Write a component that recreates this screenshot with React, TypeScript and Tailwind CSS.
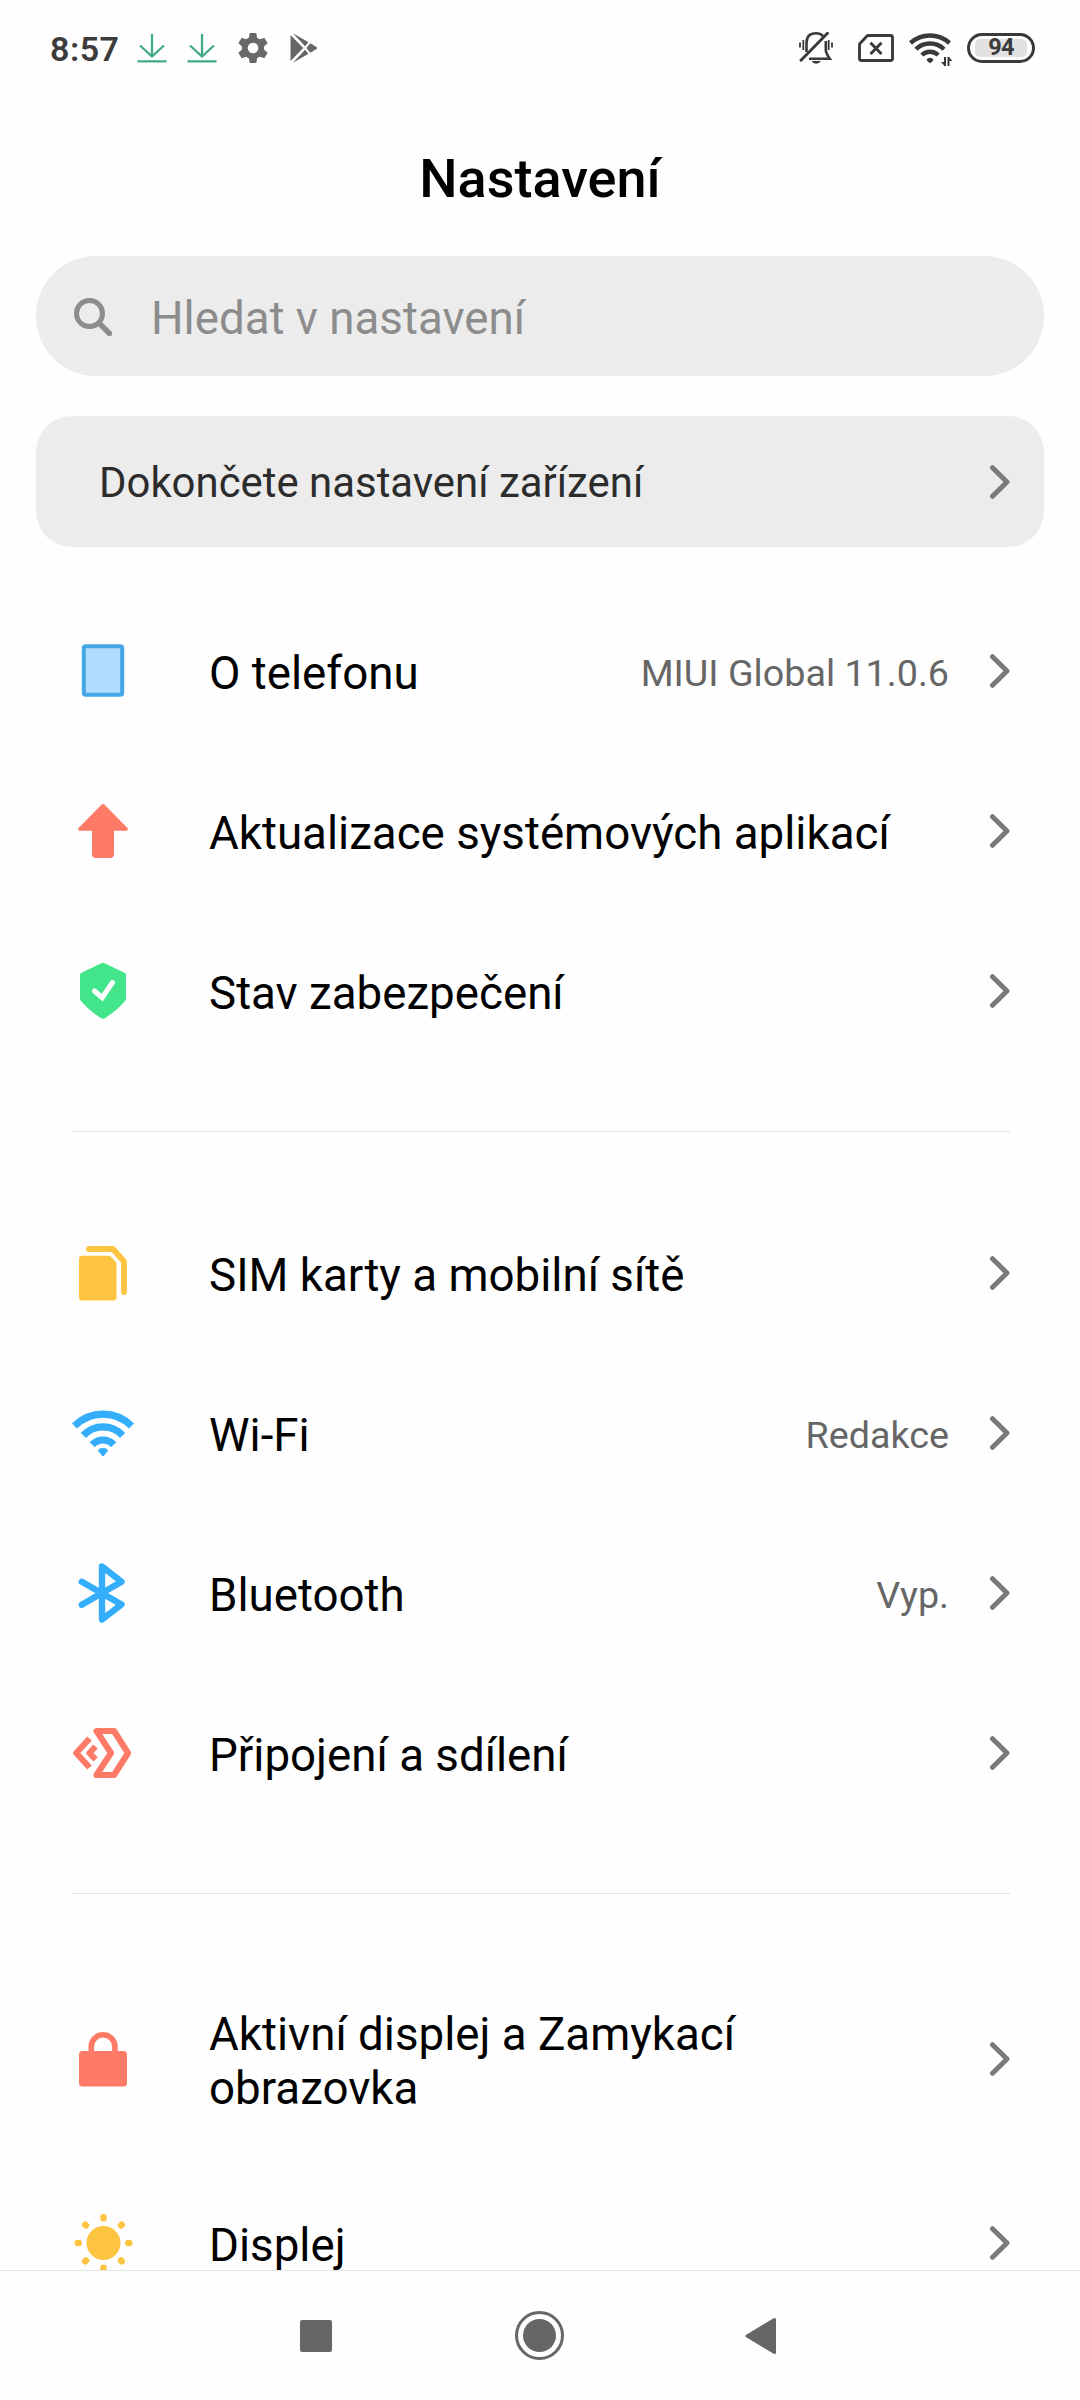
import React from "react";

const Svg = ({ children, className = "" }: { children: React.ReactNode; className?: string }) => (
  <svg viewBox="0 0 64 64" fill="none" className={`h-16 w-16 shrink-0 ${className}`}>
    {children}
  </svg>
);

const Chevron = () => (
  <svg viewBox="0 0 20 34" fill="none" className="h-[34px] w-5 shrink-0">
    <path d="M2.5 2.7 17 17 2.5 31.3" stroke="#7a7a7a" strokeWidth="5" strokeLinecap="round" strokeLinejoin="round" />
  </svg>
);

const PhoneIcon = () => (
  <Svg>
    <rect x="12.800" y="7.300" width="38.400" height="48.500" rx="2" fill="#b0dcfd" stroke="#45a6e6" strokeWidth="4" />
  </Svg>
);
const UpdateIcon = () => (
  <Svg>
    <path
      d="M33.4 5.6a2 2 0 0 0-2.8 0L7.6 29c-1.100 1.200-.4 2.700 1.200 2.700H21V55q0 4 4 4h14q4 0 4-4V31.700h12.200c1.600 0 2.300-1.500 1.200-2.700z"
      fill="#fd7b66"
    />
  </Svg>
);
const ShieldIcon = () => (
  <Svg>
    <path
      d="M30.300 4.300q1.700-1 3.400 0L54 14q1 .6 1 2v23q0 2.200-1.400 3.600Q45 52.500 33.800 59.300q-1.800 1-3.600 0Q19 52.500 10.400 42.600 9 41.200 9 39V16q0-1.400 1-2z"
      fill="#43e58b"
    />
    <path d="m23.500 32 7.700 6.700L41.500 23.500" stroke="#fff" strokeWidth="5" strokeLinecap="round" />
  </Svg>
);
const SimIcon = () => (
  <Svg>
    <path d="M11 14.700h26.500q1.500 0 2.500 1l4.500 4.800q1 1 1 2.500V56.500q0 3-3 3H11q-3 0-3-3V17.700q0-3 3-3z" fill="#fdc441" />
    <path d="M18 8h24L53 20.500V51" stroke="#fdc441" strokeWidth="5.800" strokeLinecap="round" strokeLinejoin="round" />
  </Svg>
);
const WifiIcon = () => (
  <Svg>
    <g stroke="#34adfb" strokeWidth="7.200">
      <path d="M3.500 25A40 40 0 0 1 60.500 25" />
      <path d="M12.400 34.500A26.500 26.500 0 0 1 51.600 34.500" />
      <path d="M21.300 43.700A14.500 14.500 0 0 1 42.700 43.700" />
    </g>
    <path d="M27.400 50.200Q27 47 32 47t4.600 3.200L33 54.700q-1 .7-2 0z" fill="#34adfb" />
  </Svg>
);
const BluetoothIcon = () => (
  <Svg>
    <path
      d="M10.800 20.800 50.500 43.500 31 58.500V5.500L50.500 20.800 10.800 43.800"
      stroke="#34adfb"
      strokeWidth="6.400"
      strokeLinecap="round"
      strokeLinejoin="round"
    />
  </Svg>
);
const ConnectionIcon = () => (
  <Svg>
    <g stroke="#fd7b66" strokeWidth="6.200" strokeLinejoin="round">
      <path d="M25.500 10H43L57 32 43 54H25.500L40 32z" />
      <path d="M18.500 17.500 5.300 32 18.500 46.500" />
      <path d="M24.500 25.500 18.500 32l6 6.500" />
    </g>
  </Svg>
);
const LockIcon = () => (
  <Svg>
    <rect x="8" y="24" width="48" height="35.500" rx="3.500" fill="#fd7b66" />
    <path d="M20.300 26V19.500a11.800 11.800 0 0 1 23.600 0V26" stroke="#fd7b66" strokeWidth="5.600" />
  </Svg>
);
const SunIcon = () => (
  <Svg>
    <g fill="#fdc441">
      <circle cx="32.500" cy="32" r="17" />
      {[0, 45, 90, 135, 180, 225, 270, 315].map((a) => (
        <rect key={a} x="29.300" y="3" width="6.400" height="7.400" rx="3" transform={`rotate(${a} 32.500 32)`} />
      ))}
    </g>
  </Svg>
);

const DownloadIcon = () => (
  <svg viewBox="0 0 30 30" fill="none" stroke="#42a88a" strokeWidth="2.300" className="h-[30px] w-[30px] shrink-0">
    <path d="M15 1v22M3 12.500l12 11 12-11M.5 28.300h29" />
  </svg>
);
const GearIcon = () => (
  <svg viewBox="0 0 30 30" className="h-[30px] w-[30px] shrink-0">
    <g fill="#686868">
      <circle cx="15" cy="15" r="11" />
      {[0, 60, 120, 180, 240, 300].map((a) => (
        <path key={a} d="M10.500 7 11.700 0h6.600l1.200 7z" transform={`rotate(${a} 15 15)`} />
      ))}
    </g>
    <circle cx="15" cy="15" r="5.300" fill="#fefefe" />
  </svg>
);
const PlayIcon = () => (
  <svg viewBox="0 0 28 30" fill="#666" className="h-[30px] w-7 shrink-0">
    <path d="M.5 2 13.300 15 .5 28zM3 .3 18.500 9.300 15 13.300zM3 29.700 18.500 20.700 15 16.700zM20.300 10.300 26.500 14q1.300 1 0 2L20.300 19.700 16.300 15z" />
  </svg>
);
const BellIcon = () => (
  <svg viewBox="0 0 34 32" fill="none" stroke="#3a3a3a" strokeWidth="2.600" className="h-8 w-[34px] shrink-0">
    <path d="M7.500 20V11Q7.500 1.300 17 1.300q4.500 0 7 2.700M26.800 9v9q0 3 4 8.800H10" />
    <path d="M2 28.300 28.500 1.300" strokeWidth="2.900" strokeLinecap="round" />
    <path d="M1 10.500v5M4.300 8v10M29.700 8v10M33 10.500v5" strokeWidth="1.800" />
    <path d="M12.500 29h9.500q-2 2.800-4.800 2.800T12.500 29z" fill="#3a3a3a" stroke="none" />
  </svg>
);
const NoSimIcon = () => (
  <svg viewBox="0 0 36 28" fill="none" stroke="#3a3a3a" strokeWidth="2.900" className="h-7 w-9 shrink-0">
    <path d="M9.500 1.500H32.500q2 0 2 2V24.500q0 2-2 2H3.500q-2 0-2-2V10z" strokeLinejoin="round" />
    <path d="m12.500 8.700 11 11.300M23.500 8.700l-11 11.300" />
  </svg>
);
const StatusWifiIcon = () => (
  <svg viewBox="0 0 43 34" fill="none" className="h-[34px] w-[43px] shrink-0">
    <g stroke="#3a3a3a" strokeWidth="4.400">
      <path d="M1.500 10A29 29 0 0 1 40.500 10" />
      <path d="M7 16.200A20 20 0 0 1 35 16.200" />
      <path d="M12.800 22A12 12 0 0 1 29.200 22" />
    </g>
    <path d="M17.500 26.500Q21 23 24.500 26.500q-.5 2-3.500 3.700-3-1.700-3.500-3.700z" fill="#3a3a3a" />
    <path d="M36 24v9M39.500 24v9" stroke="#3a3a3a" strokeWidth="2" />
    <path d="M36 33.500 32 29h4zM39.500 23.500l4 4.500h-4z" fill="#3a3a3a" />
  </svg>
);

type RowData = { icon: React.ReactNode; label: string; value?: string; tall?: boolean };

const Row = ({ icon, label, value, tall }: RowData) => (
  <div className={`flex shrink-0 items-center pr-[70px] pl-[71px] ${tall ? "h-[208px]" : "h-40"}`}>
    {icon}
    <span className="relative top-[3px] ml-[74px] w-0 max-w-[560px] flex-auto text-[45.700px] leading-[54px] text-black">
      <span className={tall ? "block" : "block whitespace-nowrap"}>{label}</span>
    </span>
    <span className="relative top-[2px] mr-[41px] ml-auto text-[37.700px] whitespace-nowrap text-[#666]">{value}</span>
    <Chevron />
  </div>
);

const Divider = () => <div className="mt-[60px] mr-[70px] mb-[61px] ml-[71px] h-px shrink-0 bg-[#e0e0e0]" />;

const groups: RowData[][] = [
  [
    { icon: <PhoneIcon />, label: "O telefonu", value: "MIUI Global 11.0.6" },
    { icon: <UpdateIcon />, label: "Aktualizace systémových aplikací" },
    { icon: <ShieldIcon />, label: "Stav zabezpečení" },
  ],
  [
    { icon: <SimIcon />, label: "SIM karty a mobilní sítě" },
    { icon: <WifiIcon />, label: "Wi-Fi", value: "Redakce" },
    { icon: <BluetoothIcon />, label: "Bluetooth", value: "Vyp." },
    { icon: <ConnectionIcon />, label: "Připojení a sdílení" },
  ],
  [
    { icon: <LockIcon />, label: "Aktivní displej a Zamykací obrazovka", tall: true },
    { icon: <SunIcon />, label: "Displej" },
  ],
];

export default function App() {
  return (
    <div className="flex h-[2400px] w-[1080px] flex-col overflow-hidden bg-[#fefefe] font-['Roboto',sans-serif]">
      <div className="flex h-24 shrink-0 items-center pr-[45px] pl-[50px]">
        <span className="relative top-px w-[87px] text-[34px] leading-none font-semibold tracking-[0.500px] text-[#3c3c3c]">8:57</span>
        <DownloadIcon />
        <div className="ml-5 flex">
          <DownloadIcon />
        </div>
        <div className="ml-[21px] flex">
          <GearIcon />
        </div>
        <div className="ml-[22px] flex">
          <PlayIcon />
        </div>
        <div className="ml-auto flex items-center">
          <BellIcon />
          <div className="ml-[25px]">
            <NoSimIcon />
          </div>
          <div className="mt-[3px] ml-[15px]">
            <StatusWifiIcon />
          </div>
          <div className="ml-[15px] flex h-[30px] w-[68px] items-center justify-center rounded-full border-[3px] border-[#3a3a3a]">
            <div className="flex h-[18px] w-[52px] items-center justify-center rounded-[5px] bg-[#e2e2e2] text-[23.500px] leading-none font-bold tracking-[-0.800px] text-[#3a3a3a]">
              94
            </div>
          </div>
        </div>
      </div>

      <h1 className="h-40 shrink-0 pt-[51px] text-center text-[54px] leading-[64px] font-medium text-black">Nastavení</h1>

      <div className="mx-9 flex h-[120px] shrink-0 items-center rounded-full bg-[#ececec] pl-[38px]">
        <svg viewBox="0 0 38 38" fill="none" stroke="#8c8c8c" className="relative top-px h-[38px] w-[38px]">
          <circle cx="15.500" cy="15.500" r="13" strokeWidth="5" />
          <path d="m25 25 10.500 10.500" strokeWidth="5.500" strokeLinecap="round" />
        </svg>
        <span className="relative top-[3px] ml-[39px] text-[45.700px] text-[#8c8c8c]">Hledat v nastavení</span>
      </div>

      <div className="mx-9 mt-10 flex h-[131px] shrink-0 items-center justify-between rounded-[36px] bg-[#ececec] pr-[34px] pl-[63px]">
        <span className="relative top-[2px] text-[41.900px] text-[#2c2c2c]">Dokončete nastavení zařízení</span>
        <Chevron />
      </div>

      <div className="flex min-h-0 flex-1 flex-col overflow-hidden pt-11">
        {groups.map((rows, i) => (
          <React.Fragment key={i}>
            {i > 0 && <Divider />}
            {rows.map((r) => (
              <Row key={r.label} {...r} />
            ))}
          </React.Fragment>
        ))}
      </div>

      <div className="flex h-[130px] shrink-0 items-center border-t border-[#e6e6e6] pl-[300px]">
        <div className="h-8 w-8 rounded-[2px] bg-[#666]" />
        <div className="ml-[183px] flex h-[49px] w-[49px] items-center justify-center rounded-full border-[3.500px] border-[#666]">
          <div className="h-[33px] w-[33px] rounded-full bg-[#666]" />
        </div>
        <svg viewBox="0 0 32 38" className="ml-[181px] h-[38px] w-8">
          <path d="M2 19 29.500 2.500v33z" fill="#666" stroke="#666" strokeWidth="3" strokeLinejoin="round" />
        </svg>
      </div>
    </div>
  );
}
